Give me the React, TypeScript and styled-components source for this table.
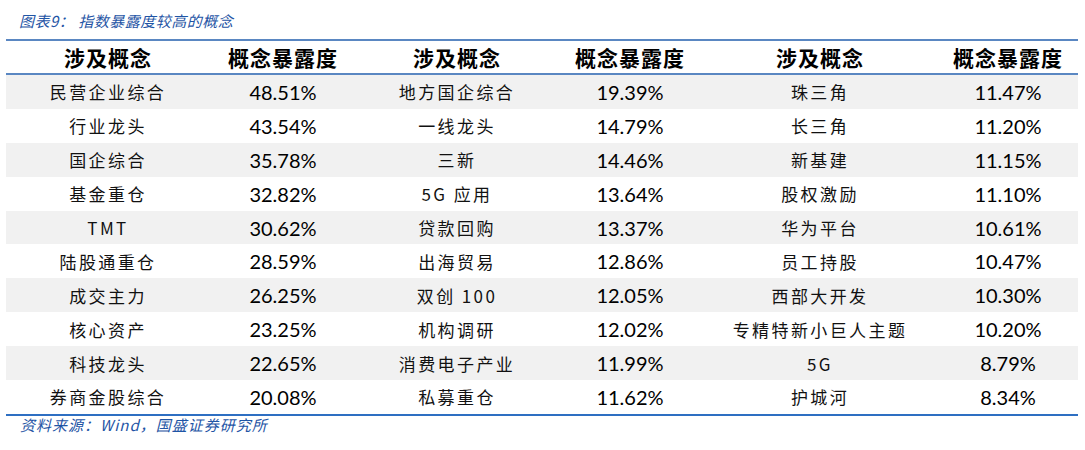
import React from 'react';
import styled, { createGlobalStyle } from 'styled-components';

const GlobalStyle = createGlobalStyle`
  body {
    margin: 0;
    background: #ffffff;
  }
`;

const Page = styled.div`
  width: 1085px;
  height: 450px;
  padding: 10px 7px 0 6px;
  box-sizing: border-box;
  background: #fff;
`;

const Caption = styled.div`
  font-family: 'Noto Sans CJK SC', sans-serif;
  font-style: italic;
  font-size: 15px;
  line-height: 22px;
  color: #1f55a5;
  padding-left: 13px;
  height: 29px;
  letter-spacing: 0.5px;
`;

const Table = styled.div`
  border-top: 2px solid #5a87c2;
  border-bottom: 2px solid #2e6fc2;
`;

const Row = styled.div<{ $shade?: boolean; $head?: boolean }>`
  display: grid;
  grid-template-columns: 204px 146px 202px 144px 236px 140px;
  height: ${(p) => (p.$head ? '32px' : '33.9px')};
  align-items: center;
  background: ${(p) => (p.$shade ? '#f1f1f1' : '#fff')};
  border-bottom: ${(p) => (p.$head ? '2px solid #5a87c2' : 'none')};
`;

const HeadCell = styled.div`
  text-align: center;
  font-family: 'Noto Sans CJK SC', sans-serif;
  font-weight: 700;
  font-size: 21px;
  letter-spacing: 1px;
  color: #000;
`;

const NameCell = styled.div`
  text-align: center;
  font-family: 'Noto Sans CJK SC', sans-serif;
  font-size: 17px;
  letter-spacing: 2.4px;
  color: #111;
`;

const ValueCell = styled.div`
  text-align: center;
  font-family: Lato, 'Liberation Sans', sans-serif;
  font-size: 20px;
  color: #000;
`;

const Source = styled.div`
  font-family: 'Noto Sans CJK SC', sans-serif;
  font-style: italic;
  font-size: 15px;
  line-height: 16px;
  color: #1f55a5;
  padding-left: 14px;
  padding-top: 1px;
  letter-spacing: 1px;
`;

const rows: [string, string, string, string, string, string][] = [
  ['民营企业综合', '48.51%', '地方国企综合', '19.39%', '珠三角', '11.47%'],
  ['行业龙头', '43.54%', '一线龙头', '14.79%', '长三角', '11.20%'],
  ['国企综合', '35.78%', '三新', '14.46%', '新基建', '11.15%'],
  ['基金重仓', '32.82%', '5G 应用', '13.64%', '股权激励', '11.10%'],
  ['TMT', '30.62%', '贷款回购', '13.37%', '华为平台', '10.61%'],
  ['陆股通重仓', '28.59%', '出海贸易', '12.86%', '员工持股', '10.47%'],
  ['成交主力', '26.25%', '双创 100', '12.05%', '西部大开发', '10.30%'],
  ['核心资产', '23.25%', '机构调研', '12.02%', '专精特新小巨人主题', '10.20%'],
  ['科技龙头', '22.65%', '消费电子产业', '11.99%', '5G', '8.79%'],
  ['券商金股综合', '20.08%', '私募重仓', '11.62%', '护城河', '8.34%'],
];

const App: React.FC = () => {
  return (
    <Page>
      <GlobalStyle />
      <Caption>图表9：&nbsp;指数暴露度较高的概念</Caption>
      <Table>
        <Row $head>
          <HeadCell>涉及概念</HeadCell>
          <HeadCell>概念暴露度</HeadCell>
          <HeadCell>涉及概念</HeadCell>
          <HeadCell>概念暴露度</HeadCell>
          <HeadCell>涉及概念</HeadCell>
          <HeadCell>概念暴露度</HeadCell>
        </Row>
        {rows.map((r, i) => (
          <Row key={i} $shade={i % 2 === 0}>
            <NameCell>{r[0]}</NameCell>
            <ValueCell>{r[1]}</ValueCell>
            <NameCell>{r[2]}</NameCell>
            <ValueCell>{r[3]}</ValueCell>
            <NameCell>{r[4]}</NameCell>
            <ValueCell>{r[5]}</ValueCell>
          </Row>
        ))}
      </Table>
      <Source>资料来源：Wind，国盛证券研究所</Source>
    </Page>
  );
};

export default App;
